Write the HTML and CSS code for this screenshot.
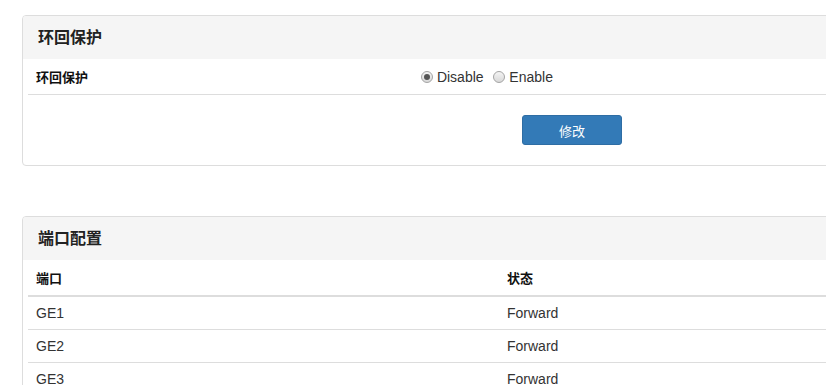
FILE: index.html
```html
<!DOCTYPE html>
<html lang="zh-CN">
<head>
    <meta charset="UTF-8">
    <title>环回保护</title>
    <link rel="stylesheet" href="styles.css">
</head>
<body>
    <div class="panel">
        <div class="panel-heading">环回保护</div>
        <div class="panel-body">
            <table class="form-table">
                <tr>
                    <th class="label-col">环回保护</th>
                    <td>
                        <label class="radio"><input type="radio" name="loop" checked> Disable</label>
                        <label class="radio"><input type="radio" name="loop"> Enable</label>
                    </td>
                </tr>
            </table>
            <div class="actions">
                <button class="btn">修改</button>
            </div>
        </div>
    </div>

    <div class="panel second">
        <div class="panel-heading">端口配置</div>
        <div class="panel-body">
            <table class="list-table">
                <thead>
                    <tr><th class="port-col">端口</th><th>状态</th></tr>
                </thead>
                <tbody>
                    <tr><td>GE1</td><td>Forward</td></tr>
                    <tr><td>GE2</td><td>Forward</td></tr>
                    <tr><td>GE3</td><td>Forward</td></tr>
                </tbody>
            </table>
        </div>
    </div>
</body>
</html>
```

FILE: styles.css
```css
body {
    margin: 0;
    padding: 15px 0 0 22px;
    font-family: "Liberation Sans", Arial, "Noto Sans CJK SC", sans-serif;
    font-size: 14px;
    color: #333;
    background: #fff;
    overflow: hidden;
}
.panel {
    width: 1098px;
    border: 1px solid #ddd;
    border-radius: 4px;
    background: #fff;
}
.panel.second {
    margin-top: 50px;
}
.panel-heading {
    background-color: #f5f5f5;
    padding: 0 15px;
    height: 43px;
    line-height: 41px;
    font-size: 16px;
    font-weight: bold;
    color: #222;
    font-family: "Noto Sans CJK SC", sans-serif;
    border-radius: 3px 3px 0 0;
}
.panel-body {
    padding: 0 5px;
}
table {
    width: 100%;
    border-collapse: collapse;
}
th {
    text-align: left;
    font-weight: bold;
    font-size: 13px;
    color: #111;
    font-family: "Noto Sans CJK SC", sans-serif;
}
.form-table th,
.form-table td {
    padding: 0 8px;
    height: 35px;
    border-bottom: 1px solid #ddd;
}
.label-col {
    width: 369px;
}
.radio {
    margin-right: 6px;
}
.radio input {
    -webkit-appearance: none;
    appearance: none;
    width: 12px;
    height: 12px;
    margin: 0;
    border: 1px solid #a5a5a5;
    border-radius: 50%;
    background: linear-gradient(#f4f4f4, #d8d8d8);
    vertical-align: -1px;
    position: relative;
}
.radio input:checked::after {
    content: "";
    position: absolute;
    left: 2px;
    top: 2px;
    width: 6px;
    height: 6px;
    border-radius: 50%;
    background: #555;
}
.actions {
    text-align: center;
    padding: 20px 0;
}
.btn {
    width: 100px;
    height: 30px;
    background-color: #337ab7;
    border: 1px solid #2e6da4;
    border-radius: 3px;
    color: #fff;
    font-size: 13px;
    font-family: "Noto Sans CJK SC", sans-serif;
}
.list-table th {
    height: 35px;
    padding: 0 8px;
    border-bottom: 2px solid #ddd;
}
.list-table td {
    height: 32px;
    padding: 0 8px;
    border-bottom: 1px solid #ddd;
}
.port-col {
    width: 455px;
}
```
